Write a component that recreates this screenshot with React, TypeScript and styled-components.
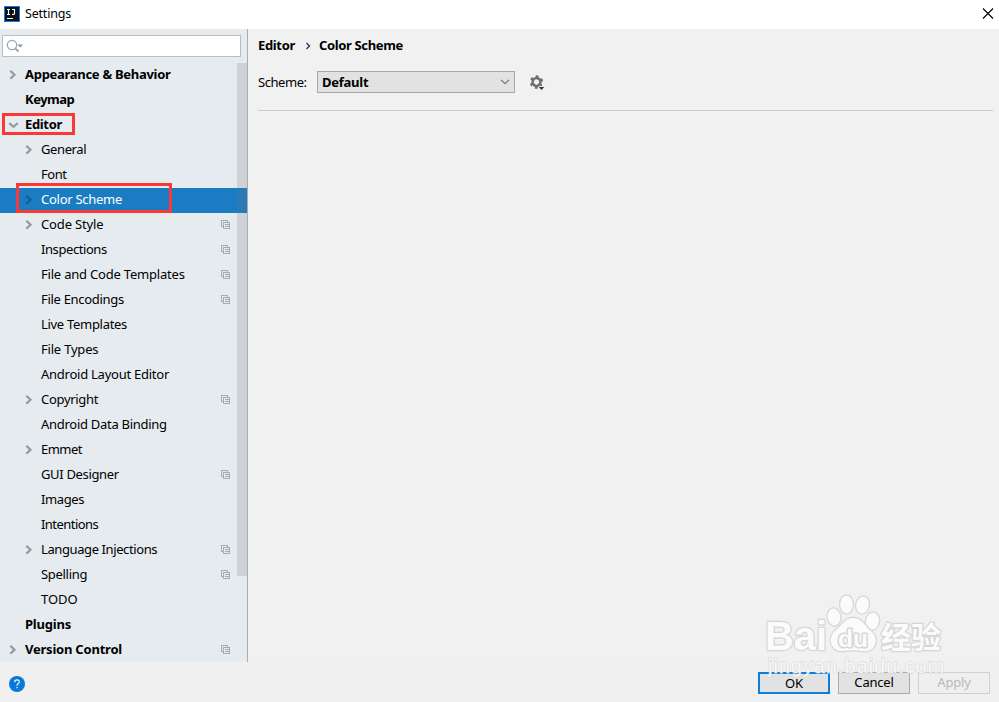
import React from "react";
import styled, { createGlobalStyle, css } from "styled-components";

const Global = createGlobalStyle`
  * { box-sizing: border-box; }
  body { margin: 0; background: #fff; }
`;

const Window = styled.div`
  position: relative;
  display: flex;
  flex-direction: column;
  width: 999px;
  height: 702px;
  overflow: hidden;
  background: #f0f0f0;
  color: #000;
  font: 13px/20px "Noto Sans", "Open Sans", sans-serif;
`;

const TitleBar = styled.header`
  display: flex;
  align-items: center;
  height: 29px;
  padding: 0 5px 2px 4px;
  background: #fff;
`;

const Title = styled.span`
  flex: 1;
  margin-left: 5px;
  font-size: 12.5px;
  letter-spacing: -0.2px;
`;

const Body = styled.main`
  display: flex;
  height: 633px;
`;

const Sidebar = styled.aside`
  display: flex;
  flex-direction: column;
  width: 248px;
  padding-top: 6px;
  background: #e6ebef;
  border-right: 1px solid #a9adb0;
`;

const Search = styled.div`
  display: flex;
  align-items: center;
  width: 239px;
  height: 22px;
  margin: 0 0 6px 2px;
  padding-left: 3px;
  background: #fff;
  border: 1px solid #b9bdc0;
`;

const TreeArea = styled.div`
  position: relative;
  height: 599px;
  overflow: hidden;
`;

const ScrollThumb = styled.div`
  position: absolute;
  top: 0;
  right: 0;
  width: 10px;
  height: 513px;
  background: rgba(110, 110, 120, 0.2);
`;

const Row = styled.div<{ $level: number; $selected?: boolean }>`
  display: flex;
  align-items: center;
  height: 25px;
  padding: 0 16px 2px ${(p) => 7 + p.$level * 16}px;
  ${(p) =>
    p.$selected &&
    css`
      background: #1a7dc4;
      color: #fff;
    `}
`;

const ArrowSlot = styled.span`
  display: flex;
  width: 18px;
  height: 12px;
`;

const Label = styled.span<{ $bold?: boolean; $spacing?: number }>`
  flex: 1;
  margin-bottom: 2px;
  white-space: nowrap;
  font-weight: ${(p) => (p.$bold ? 700 : 400)};
  letter-spacing: ${(p) => p.$spacing ?? 0}px;
`;

const Highlight = styled.div<{ $x: number; $y: number; $w: number; $h: number }>`
  position: absolute;
  left: ${(p) => p.$x}px;
  top: ${(p) => p.$y}px;
  width: ${(p) => p.$w}px;
  height: ${(p) => p.$h}px;
  border: 3px solid #fb3838;
`;

const Content = styled.section`
  flex: 1;
  padding: 6px 6px 0 10px;
  background: #f1f1f1;
`;

const Breadcrumb = styled.div`
  display: flex;
  align-items: center;
  height: 20px;
  font-weight: 700;
  letter-spacing: -0.34px;
`;

const CrumbArrow = styled.svg`
  margin: 1px 8px 0 10px;
`;

const SchemeRow = styled.div`
  display: flex;
  align-items: center;
  height: 56px;
  padding-bottom: 2px;
  border-bottom: 1px solid #cbcbcb;
`;

const SchemeLabel = styled.span`
  width: 59px;
  letter-spacing: -0.45px;
`;

const Select = styled.div`
  display: flex;
  align-items: center;
  justify-content: space-between;
  width: 198px;
  height: 22px;
  margin-right: 14px;
  padding: 0 4px;
  background: #e2e2e2;
  border: 1px solid #a9a9a9;
  font-weight: 700;
  letter-spacing: -0.25px;
`;

const Footer = styled.footer`
  display: flex;
  align-items: center;
  height: 40px;
  padding: 2px 9px 0 9px;
  gap: 8px;
  background: #f0f0f0;
`;

const HelpIcon = styled.svg`
  margin: 2px auto 0 0;
`;

const Button = styled.button<{ $kind?: "primary" | "disabled" }>`
  width: 72px;
  height: 22px;
  padding: 0 0 2px;
  font: inherit;
  line-height: 18px;
  letter-spacing: -0.2px;
  color: ${(p) => (p.$kind === "disabled" ? "#b9b9b9" : "#000")};
  background: ${(p) => (p.$kind === "disabled" ? "#efefef" : "#e2e2e2")};
  border: ${(p) =>
    p.$kind === "primary"
      ? "2px solid #0a80dc"
      : p.$kind === "disabled"
        ? "1px solid #d0d0d0"
        : "1px solid #acacac"};
`;

const Watermark = styled.svg`
  position: absolute;
  left: 760px;
  top: 588px;
  pointer-events: none;
`;

type Item = {
  text: string;
  level: number;
  arrow?: "right" | "down";
  copy?: boolean;
  selected?: boolean;
  spacing?: number;
};

const items: Item[] = [
  { text: "Appearance & Behavior", level: 0, arrow: "right", spacing: -0.29 },
  { text: "Keymap", level: 0, spacing: -0.5 },
  { text: "Editor", level: 0, arrow: "down", spacing: -0.34 },
  { text: "General", level: 1, arrow: "right", spacing: -0.4 },
  { text: "Font", level: 1, spacing: -0.45 },
  { text: "Color Scheme", level: 1, arrow: "right", selected: true, spacing: -0.27 },
  { text: "Code Style", level: 1, arrow: "right", copy: true, spacing: -0.15 },
  { text: "Inspections", level: 1, copy: true, spacing: -0.42 },
  { text: "File and Code Templates", level: 1, copy: true, spacing: -0.2 },
  { text: "File Encodings", level: 1, copy: true, spacing: -0.3 },
  { text: "Live Templates", level: 1, spacing: -0.3 },
  { text: "File Types", level: 1, spacing: -0.2 },
  { text: "Android Layout Editor", level: 1, spacing: -0.25 },
  { text: "Copyright", level: 1, arrow: "right", copy: true, spacing: -0.3 },
  { text: "Android Data Binding", level: 1, spacing: -0.28 },
  { text: "Emmet", level: 1, arrow: "right", spacing: -0.55 },
  { text: "GUI Designer", level: 1, copy: true, spacing: -0.34 },
  { text: "Images", level: 1, spacing: -0.4 },
  { text: "Intentions", level: 1, spacing: -0.55 },
  { text: "Language Injections", level: 1, arrow: "right", copy: true, spacing: -0.4 },
  { text: "Spelling", level: 1, copy: true, spacing: -0.3 },
  { text: "TODO", level: 1 },
  { text: "Plugins", level: 0, spacing: -0.2 },
  { text: "Version Control", level: 0, arrow: "right", copy: true, spacing: -0.22 },
];

const Arrow = ({ dir, color }: { dir: "right" | "down"; color: string }) => (
  <svg width="13" height="12" fill="none" stroke={color} strokeWidth="2.2">
    <path d={dir === "right" ? "M3.3 1.8 L7.5 5.8 L3.3 9.8" : "M2.3 4.2 L6.5 7.8 L10.7 4.2"} />
  </svg>
);

const CopyIcon = () => (
  <svg width="10" height="10" fill="none" stroke="#a3acb3" shapeRendering="crispEdges">
    <path d="M2.5 6.5H.5V.5H6.5V2.5M2.5 2.5H8.5V8.5H2.5ZM4 4.5H7.5M4 6.5H7.5" />
  </svg>
);

const AppLogo = () => (
  <svg width="16" height="16">
    <rect width="16" height="16" fill="#087cfa" />
    <rect x="1" y="1" width="14" height="14" fill="#111" />
    <path
      d="M3 3.5H6M4.5 3.5V8M3 8.5H6M8 3.5H11M10.5 3V7.5Q10.5 8.5 8 8.5M3 12.5H9"
      fill="none"
      stroke="#fff"
      strokeWidth="1.1"
    />
  </svg>
);

const Paw = () => (
  <>
    <ellipse cx="74" cy="29" rx="6.3" ry="8.5" transform="rotate(-8 74 29)" />
    <ellipse cx="86.5" cy="16.500" rx="6.300" ry="9" />
    <ellipse cx="102.500" cy="17" rx="6.300" ry="8.500" transform="rotate(12 102 17)" />
    <ellipse cx="112.500" cy="33" rx="6.500" ry="8.500" transform="rotate(8 112 33)" />
    <path d="M93 30C85 30 82 37 76 42C67 49 70 64 83 63C90 62 96 62 103 63C117 65 119 49 111 43C104 37 102 30 93 30Z" />
  </>
);

export default function App() {
  return (
    <>
      <Global />
      <Window>
        <TitleBar>
          <AppLogo />
          <Title>Settings</Title>
          <svg width="12" height="12" stroke="#000" strokeWidth="1.1">
            <path d="M1 .5L11 10.500M11 .5L1 10.500" />
          </svg>
        </TitleBar>
        <Body>
          <Sidebar>
            <Search>
              <svg width="18" height="14" fill="none" stroke="#9aa5ad" strokeWidth="1.2">
                <circle cx="6" cy="6" r="4.700" />
                <path d="M9.300 9.500L12.500 12.500" strokeWidth="1.800" />
                <path d="M11.500 5.500H17L14.200 8.500Z" fill="#88939b" stroke="none" />
              </svg>
            </Search>
            <TreeArea>
              {items.map((it) => (
                <Row key={it.text} $level={it.level} $selected={it.selected}>
                  <ArrowSlot>
                    {it.arrow && (
                      <Arrow dir={it.arrow} color={it.selected ? "#145e94" : "#949a9e"} />
                    )}
                  </ArrowSlot>
                  <Label $bold={it.level === 0} $spacing={it.spacing}>
                    {it.text}
                  </Label>
                  {it.copy && <CopyIcon />}
                </Row>
              ))}
              <ScrollThumb />
            </TreeArea>
          </Sidebar>
          <Content>
            <Breadcrumb>
              <span>Editor</span>
              <CrumbArrow width="6" height="8" fill="none" stroke="#333" strokeWidth="1.300">
                <path d="M1.500 1L4.500 4L1.500 7" />
              </CrumbArrow>
              <span>Color Scheme</span>
            </Breadcrumb>
            <SchemeRow>
              <SchemeLabel>Scheme:</SchemeLabel>
              <Select>
                <span>Default</span>
                <svg width="10" height="6" fill="none" stroke="#666" strokeWidth="1.100">
                  <path d="M1 .8L5 4.600L9 .8" />
                </svg>
              </Select>
              <svg width="17" height="18">
                <g fill="none" stroke="#6e6e6e" transform="rotate(30 7.500 9)">
                  <circle cx="7.500" cy="9" r="3.900" strokeWidth="2.600" />
                  <circle
                    cx="7.500"
                    cy="9"
                    r="5.500"
                    strokeWidth="2.400"
                    strokeDasharray="2.700 3.060"
                    strokeDashoffset="1.350"
                  />
                </g>
                <path d="M9.800 14H15.300L12.500 17Z" fill="#333" />
              </svg>
            </SchemeRow>
          </Content>
        </Body>
        <Footer>
          <HelpIcon width="16" height="16">
            <circle cx="8" cy="8" r="8" fill="#0878da" />
            <path
              d="M5.700 6.200Q5.700 3.900 8 3.900Q10.300 3.900 10.300 5.900Q10.300 7 9 7.800Q8 8.500 8 9.700M8 11V12.300"
              fill="none"
              stroke="#fff"
              strokeWidth="1.100"
            />
          </HelpIcon>
          <Button $kind="primary">OK</Button>
          <Button>Cancel</Button>
          <Button $kind="disabled">Apply</Button>
        </Footer>
        <Highlight $x={2} $y={113} $w={73} $h={22} />
        <Highlight $x={16} $y={183} $w={156} $h={30} />
        <Watermark width="200" height="100">
          <g
            fill="#fbfbfb"
            stroke="#d6d6d6"
            strokeWidth="2.500"
            paintOrder="stroke"
            strokeLinejoin="round"
            fontFamily="Liberation Sans"
            fontWeight="700"
          >
            <text x="5" y="62" fontSize="40" textLength="62" lengthAdjust="spacingAndGlyphs">Bai</text>
            <Paw />
            <text x="78" y="59" fontSize="24" textLength="30" lengthAdjust="spacingAndGlyphs" strokeWidth="3">du</text>
            <text x="121" y="60" fontSize="30" fontFamily="Noto Sans CJK SC" textLength="60">经验</text>
          </g>
          <text
            x="8"
            y="85"
            fontSize="19.500"
            fontFamily="Liberation Sans"
            textLength="176"
            fill="#fff"
            stroke="#d4d4d4"
            strokeWidth="1.500"
            paintOrder="stroke"
            fillOpacity="0.800"
            strokeOpacity="0.700"
          >
            jingyan.baidu.com
          </text>
        </Watermark>
      </Window>
    </>
  );
}
